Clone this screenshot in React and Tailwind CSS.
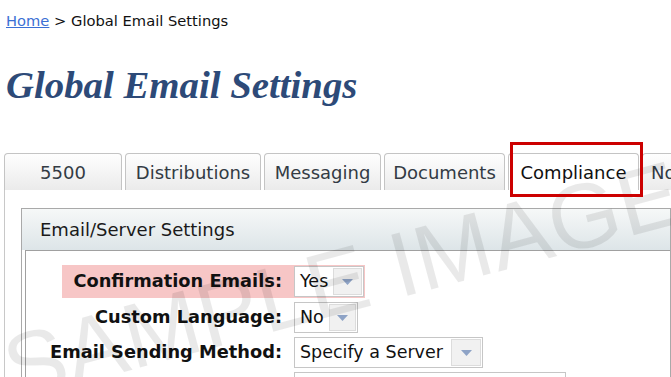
export default function App() {
  const tabs = [
    { label: "5500", w: "w-[118px]" },
    { label: "Distributions", w: "w-[136px]" },
    { label: "Messaging", w: "w-[117px]" },
    { label: "Documents", w: "w-[121px]" },
  ];
  const Arrow = () => (
    <svg width="11" height="6" viewBox="0 0 11 6">
      <path d="M0 0 L11 0 L5.5 6 Z" fill="#8ea3c6" />
    </svg>
  );
  const Select = ({ value, textW, arrowW }) => (
    <div className="flex h-[31px] border border-[#c6c6c6] bg-white">
      <div className={`${textW} flex items-center pl-[5px] text-[17.5px] text-[#111] whitespace-nowrap`}>{value}</div>
      <div className={`${arrowW} m-[1px] flex items-center justify-center border border-[#dcdcdc] bg-[#f1f1f1]`}>
        <Arrow />
      </div>
    </div>
  );
  return (
    <div className="relative w-[671px] h-[377px] overflow-hidden bg-white font-['DejaVu_Sans',sans-serif] text-[#111]">
      <div className="pt-[12px] pl-[6px] h-[28px] text-[14.7px] leading-[17px] whitespace-nowrap">
        <span className="text-[#3b6fd4] underline">Home</span>
        <span> &gt; Global Email Settings</span>
      </div>
      <h1 className="mt-[37px] ml-[6px] h-[39px] font-['Liberation_Serif',serif] italic font-bold text-[38.8px] leading-[39px] text-[#2d4a78] whitespace-nowrap">
        Global Email Settings
      </h1>
      <div className="mt-[49px] ml-[4px] flex gap-[3px] h-[37px] items-end">
        {tabs.map((t) => (
          <div
            key={t.label}
            className={`${t.w} h-[37px] shrink-0 flex items-center justify-center rounded-t-[4px] border border-b-0 border-[#c4c4c4] bg-gradient-to-b from-[#fefefe] to-[#ebebeb] text-[18px] text-[#333b44] whitespace-nowrap`}
          >
            {t.label}
          </div>
        ))}
        <div className="w-[131px] h-[37px] shrink-0 flex items-center justify-center rounded-t-[4px] border border-b-0 border-[#c4c4c4] bg-white text-[18px] text-[#111] whitespace-nowrap">
          Compliance
        </div>
        <div className="w-[60px] h-[37px] shrink-0 flex items-center pl-[8px] rounded-t-[4px] border border-b-0 border-[#c4c4c4] bg-gradient-to-b from-[#fefefe] to-[#ebebeb] text-[18px] text-[#333b44] whitespace-nowrap overflow-hidden">
          Notifications
        </div>
      </div>
      <div className="ml-[4px] border-l border-[#c8c8c8] pt-[18px] pl-[16px] h-[200px]">
        <div className="border border-[#a9a9a9] h-[200px]">
          <div className="h-[41px] bg-gradient-to-b from-[#f6f8f8] to-[#dde5e8] flex items-center pl-[18px] text-[18px] text-[#1a1a1a] whitespace-nowrap">
            Email/Server Settings
          </div>
          <div className="ml-[3px] border-t border-l border-[#a0a0a0] bg-white h-[160px] pt-[14px]">
            <div className="flex flex-col gap-[4px]">
              <div className="ml-[36px] flex items-center w-fit bg-[#f7c6c6] h-[33px] pr-[1px]">
                <div className="w-[220px] text-right font-bold text-[17.8px] whitespace-nowrap">Confirmation Emails:</div>
                <div className="ml-[12px]">
                  <Select value="Yes" textW="w-[37px]" arrowW="w-[29px]" />
                </div>
              </div>
              <div className="flex items-center h-[31px]">
                <div className="w-[256px] text-right font-bold text-[17.8px] whitespace-nowrap">Custom Language:</div>
                <div className="ml-[12px]">
                  <Select value="No" textW="w-[33px]" arrowW="w-[27px]" />
                </div>
              </div>
              <div className="flex items-center h-[31px]">
                <div className="w-[256px] text-right font-bold text-[17.8px] whitespace-nowrap">Email Sending Method:</div>
                <div className="ml-[12px]">
                  <Select value="Specify a Server" textW="w-[155px]" arrowW="w-[30px]" />
                </div>
              </div>
              <div className="flex items-center h-[31px]">
                <div className="w-[256px]" />
                <div className="ml-[12px] w-[272px] h-[31px] border border-[#c6c6c6] bg-white" />
              </div>
            </div>
          </div>
        </div>
      </div>
      <div className="pointer-events-none absolute left-[-6px] top-[326px] origin-top-left rotate-[-15deg] whitespace-nowrap font-['Liberation_Sans',sans-serif] text-[92px] leading-[92px] text-black/[0.085]">
        SAMPLE IMAGE
      </div>
      <div className="pointer-events-none absolute left-[510px] top-[142px] w-[133px] h-[55px] border-[3px] border-[#cc0000]" />
    </div>
  );
}
